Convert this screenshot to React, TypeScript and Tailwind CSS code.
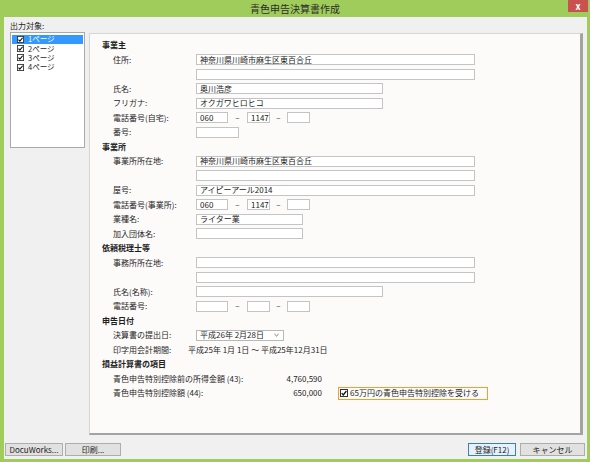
import React from 'react';

function Tick({ className }: { className: string }) {
  return (
    <svg viewBox="0 0 8 8" className={className}>
      <rect x="0.5" y="0.5" width="7" height="7" fill="#fff" stroke="#333" />
      <path d="M1.7 4.1 L3.3 5.9 L6.4 2" fill="none" stroke="#111" strokeWidth="1.3" />
    </svg>
  );
}

function Field({ w, value }: { w: string; value?: string }) {
  return (
    <div className={`${w} h-[11px] shrink-0 border border-[#c4c4c4] bg-white px-[3px] flex items-center text-[8px] leading-none text-[#222]`}>
      {value}
    </div>
  );
}

function Head({ children }: { children: React.ReactNode }) {
  return <div className="h-[14.5px] flex items-center font-bold">{children}</div>;
}

function Row({ label, children }: { label?: string; children?: React.ReactNode }) {
  return (
    <div className="h-[14.5px] flex items-center pl-[11px]">
      <div className="w-[83px] shrink-0">{label}</div>
      {children}
    </div>
  );
}

function Phone({ a, b }: { a?: string; b?: string }) {
  return (
    <div className="flex items-center">
      <Field w="w-[32px]" value={a} />
      <span className="w-[19px] text-center">–</span>
      <Field w="w-[23px]" value={b} />
      <span className="w-[17px] text-center">–</span>
      <Field w="w-[23px]" />
    </div>
  );
}

const pages = ['1ページ', '2ページ', '3ページ', '4ページ'];

export default function App() {
  return (
    <div className="w-[590px] h-[462px] bg-[#9fcc5a] flex flex-col font-['Noto_Sans_CJK_JP','Noto_Sans',sans-serif] text-[8px] leading-none text-[#1e1e1e]">
      {/* title bar */}
      <div className="h-[17px] shrink-0 relative flex items-center justify-center">
        <span className="text-[10px] text-[#2d2d2d]">青色申告決算書作成</span>
        <div className="absolute right-[2px] top-0 w-[20px] h-[12px] bg-[#c9514f] flex items-center justify-center text-white text-[9px] font-bold">
          x
        </div>
      </div>

      {/* body */}
      <div className="flex-1 ml-[4px] mr-[3px] mb-[3px] bg-[#f0f0f0] flex flex-col">
        <div className="h-[10px] mt-[4px] pl-[6px] flex items-center">出力対象:</div>

        <div className="flex flex-1 mt-[1px]">
          {/* page list */}
          <div className="ml-[6px] w-[75px] h-[116px] shrink-0 border border-[#a9a9a9] bg-white pt-[1.5px] px-[1px]">
            {pages.map((p, i) => (
              <div
                key={p}
                className={`h-[9.3px] flex items-center gap-[4px] pl-[5px] text-[7.5px] leading-[7.5px] ${i === 0 ? 'bg-[#3399ff] text-white' : ''}`}
              >
                <Tick className="w-[7px] h-[7px]" />
                <span>{p}</span>
              </div>
            ))}
          </div>

          {/* form panel */}
          <div className="ml-[4px] mr-[4px] mt-[1px] h-[402px] flex-1 bg-[#fdfbfa] border-l border-t border-[#d6d6d6] border-r-[3px] border-r-[#a3a3a3] border-b-[2px] border-b-[#a3a3a3] pl-[12px] pt-[4px]">
            <Head>事業主</Head>
            <Row label="住所:"><Field w="w-[279px]" value="神奈川県川崎市麻生区東百合丘" /></Row>
            <Row><Field w="w-[279px]" /></Row>
            <Row label="氏名:"><Field w="w-[187px]" value="奥川浩彦" /></Row>
            <Row label="フリガナ:"><Field w="w-[187px]" value="オクガワヒロヒコ" /></Row>
            <Row label="電話番号(自宅):"><Phone a="060" b="1147" /></Row>
            <Row label="番号:"><Field w="w-[43px]" /></Row>

            <Head>事業所</Head>
            <Row label="事業所所在地:"><Field w="w-[279px]" value="神奈川県川崎市麻生区東百合丘" /></Row>
            <Row><Field w="w-[279px]" /></Row>
            <Row label="屋号:"><Field w="w-[279px]" value="アイピーアール2014" /></Row>
            <Row label="電話番号(事業所):"><Phone a="060" b="1147" /></Row>
            <Row label="業種名:"><Field w="w-[107px]" value="ライター業" /></Row>
            <Row label="加入団体名:"><Field w="w-[107px]" /></Row>

            <Head>依頼税理士等</Head>
            <Row label="事務所所在地:"><Field w="w-[279px]" /></Row>
            <Row><Field w="w-[279px]" /></Row>
            <Row label="氏名(名称):"><Field w="w-[187px]" /></Row>
            <Row label="電話番号:"><Phone /></Row>

            <Head>申告日付</Head>
            <Row label="決算書の提出日:">
              <div className="w-[88px] h-[11px] border border-[#b8b8b8] bg-white pl-[3px] pr-[4px] flex items-center justify-between">
                <span>平成26年 2月28日</span>
                <svg viewBox="0 0 6 4" className="w-[5px] h-[4px]">
                  <path d="M0.5 0.8 L3 3.2 L5.5 0.8" fill="none" stroke="#444" strokeWidth="0.9" />
                </svg>
              </div>
            </Row>
            <div className="h-[14.5px] flex items-center pl-[11px]">
              <div className="w-[75px] shrink-0">印字用会計期間:</div>
              <span>平成25年 1月 1日 ～ 平成25年12月31日</span>
            </div>

            <Head>損益計算書の項目</Head>
            <div className="h-[14.5px] flex items-center pl-[11px]">
              <div className="w-[209px] flex justify-between">
                <span>青色申告特別控除前の所得金額 (43):</span>
                <span>4,760,590</span>
              </div>
            </div>
            <div className="h-[14.5px] flex items-center pl-[11px]">
              <div className="w-[209px] flex justify-between">
                <span>青色申告特別控除額 (44):</span>
                <span>650,000</span>
              </div>
              <div className="ml-[16px] w-[150px] h-[13px] border border-[#f0a030] flex items-center gap-[2px] pl-[1px]">
                <Tick className="w-[8px] h-[8px]" />
                <span>65万円の青色申告特別控除を受ける</span>
              </div>
            </div>
          </div>
        </div>

        {/* buttons */}
        <div className="h-[13px] mt-[8px] mb-[3px] flex items-stretch pl-[1px] pr-[2px]">
          <button className="w-[58px] border border-[#adadad] bg-[#e1e1e1] flex items-center justify-center">DocuWorks...</button>
          <button className="w-[56px] ml-[2px] border border-[#adadad] bg-[#e1e1e1] flex items-center justify-center">印刷...</button>
          <div className="flex-1" />
          <button className="w-[48px] border border-[#3c7fb1] bg-[#e5f1fb] flex items-center justify-center">登録(F12)</button>
          <button className="w-[65px] ml-[4px] border border-[#adadad] bg-[#e1e1e1] flex items-center justify-center">キャンセル</button>
        </div>
      </div>
    </div>
  );
}
